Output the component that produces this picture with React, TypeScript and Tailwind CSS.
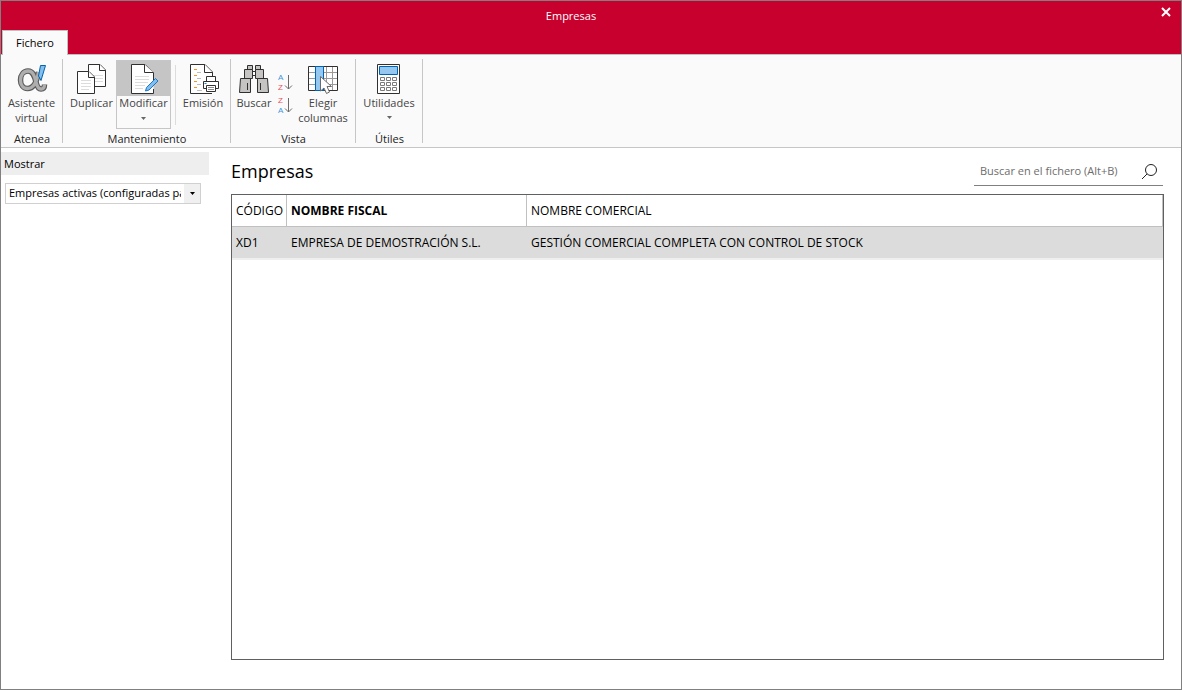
import type { ReactNode } from "react";

interface RibbonGroupProps {
  title: string;
  className: string;
  children: ReactNode;
}

interface RibbonButtonProps {
  label: string;
  icon: ReactNode;
  className: string;
  hasMenu?: boolean;
}

interface Company {
  code: string;
  fiscalName: string;
  tradeName: string;
}

const companies: Company[] = [
  {
    code: "XD1",
    fiscalName: "EMPRESA DE DEMOSTRACIÓN S.L.",
    tradeName: "GESTIÓN COMERCIAL COMPLETA CON CONTROL DE STOCK",
  },
];

const alphaPath =
  "M22.5 9C21 18 17.500 25.500 11.500 25.500C7 25.500 4.500 21.500 4.500 17C4.500 12 7.500 8 12 8C17 8 18.500 13 20 19C21.200 24 22.500 26 25 26C27.500 26 28.500 24.500 28.500 21.500";

function AssistantIcon() {
  return (
    <svg width="32" height="32" viewBox="0 0 32 32" fill="none">
      <path d={alphaPath} stroke="#5a5a5a" strokeWidth="5.500" />
      <path d={alphaPath} stroke="#aeaeae" strokeWidth="3.300" />
      <path d="M24.500 2.500H29.500L25 17.500L22.500 13Z" fill="#83beec" stroke="#0063b1" />
    </svg>
  );
}

function DuplicateIcon() {
  return (
    <svg width="32" height="32" viewBox="0 0 32 32" fill="#fff" stroke="#303030">
      <path d="M12.500 1.500H24L29.500 7V23.500H12.500Z" />
      <path d="M23.500 1.500V7.500H29.500" />
      <path d="M16 12.500H27M16 15.500H27M16 18.500H27" stroke="#dcdcdc" />
      <path d="M1.500 8.500H13L18.500 14V30.500H1.500Z" />
      <path d="M12.500 8.500V14.500H18.500" />
      <path d="M5 17.500H15M5 20.500H15M5 23.500H15M5 26.500H13" stroke="#dcdcdc" />
    </svg>
  );
}

function EditIcon() {
  return (
    <svg width="32" height="32" viewBox="0 0 32 32" fill="#fff" stroke="#303030">
      <path d="M3.500 1.500H17L25.500 10V30.500H3.500Z" stroke="none" />
      <path d="M25.500 17V10L17 1.500H3.500V30.500H25.500V26" fill="none" />
      <path d="M16.500 1.500V9.500H25.500" />
      <path d="M7 13.500H21M7 16.500H21M7 19.500H20M7 22.500H17M7 25.500H15" stroke="#dcdcdc" />
      <path d="M17.500 28L18.500 24.500L27.500 15.500L30 18L21 27Z" fill="#83beec" stroke="#1979ca" />
    </svg>
  );
}

function PrintIcon() {
  return (
    <svg width="32" height="32" viewBox="0 0 32 32" fill="#fff" stroke="#303030">
      <path d="M25.500 13V9L18 1.500H3.500V30.500H25" />
      <path d="M17.500 1.500V9.500H25.500" />
      <path d="M7 6.500H10M7 12.500H10M7 18.500H10M7 24.500H10" stroke="#f7941d" />
      <path d="M10 9.500H14M10 15.500H14M10 21.500H14M10 27.500H15" stroke="#bdbdbd" />
      <path d="M19.500 13.500H28.500V18.500H19.500Z" />
      <path d="M16.500 18.500H31.500V25.500H16.500Z" />
      <path d="M17.500 20.500H19.500" stroke="#1979ca" />
      <path d="M19.500 22.500H28.500V28.500H19.500Z" />
      <path d="M21 24.500H27M21 26.500H27" stroke="#8a8a8a" />
    </svg>
  );
}

function BinocularsIcon() {
  return (
    <svg width="32" height="32" viewBox="0 0 32 32" fill="#c6c4c2" stroke="#303030">
      <path d="M9.500 2.500H14.500V6.500H9.500ZM17.500 2.500H22.500V6.500H17.500Z" />
      <path d="M14.500 8.500H17.500V12.500H14.500Z" fill="#fff" />
      <path d="M6.500 6.500H14.500V15.500H6.500ZM17.500 6.500H25.500V15.500H17.500Z" />
      <path d="M2.500 15.500H12.500V29.500H1.500ZM19.500 15.500H29.500L30.500 29.500H19.500Z" />
      <path d="M9.500 20V27M22.500 20V27" />
    </svg>
  );
}

function ColumnsIcon() {
  return (
    <svg width="32" height="32" viewBox="0 0 32 32" fill="#fff" stroke="#303030">
      <path d="M1.500 3.500H30.500V27.500H1.500Z" />
      <path d="M2 9.500H30M2 15.500H30M2 21.500H30M19.500 4V27M25.500 4V27" stroke="#9a9a9a" />
      <path d="M8.500 3.500H16.500V27.500H8.500Z" fill="#94c8f0" stroke="#0063b1" />
      <path d="M13.500 13.500V28L17 25L19.500 30.500L22.500 29L20 23.500H24.500Z" stroke="#6a6a6a" />
    </svg>
  );
}

function CalculatorIcon() {
  return (
    <svg width="32" height="32" viewBox="0 0 32 32" fill="#fff" stroke="#303030">
      <path d="M4.500 1.500H26.500V30.500H4.500Z" />
      <path d="M6.500 3.500H24.500V11.500H6.500Z" fill="#94c8f0" stroke="#0063b1" />
      <path
        d="M7.500 14.500h4v3h-4zM13.500 14.500h4v3h-4zM19.500 14.500h4v3h-4zM7.500 19.500h4v3h-4zM13.500 19.500h4v3h-4zM19.500 19.500h4v3h-4zM7.500 24.500h4v3h-4zM13.500 24.500h4v3h-4zM19.500 24.500h4v3h-4z"
        stroke="#7a7a7a"
      />
    </svg>
  );
}

function SortIcon({ descending = false }: { descending?: boolean }) {
  return (
    <svg width="16" height="18" viewBox="0 0 16 18" fontSize="8" fontFamily="Liberation Sans, sans-serif">
      <text x="1" y="7" fill={descending ? "#e8505b" : "#3a96dd"}>
        {descending ? "Z" : "A"}
      </text>
      <text x="1" y="17" fill={descending ? "#3a96dd" : "#e8505b"}>
        {descending ? "A" : "Z"}
      </text>
      <path d="M11.500 2V16M8 12.500L11.500 16L15 12.500" fill="none" stroke="#6a6a6a" />
    </svg>
  );
}

function CaretIcon({ className }: { className: string }) {
  return (
    <svg className={className} width="5" height="3" viewBox="0 0 5 3" fill="currentColor">
      <path d="M0 0H5L2.500 3Z" />
    </svg>
  );
}

function RibbonButton({ label, icon, className, hasMenu }: RibbonButtonProps) {
  return (
    <button type="button" className={`flex flex-col items-center pt-1 text-[#444] ${className}`}>
      {icon}
      <span className="leading-[15px]">{label}</span>
      {hasMenu && <CaretIcon className="mt-[6px] text-[#666]" />}
    </button>
  );
}

function RibbonGroup({ title, className, children }: RibbonGroupProps) {
  return (
    <section className={`flex flex-col border-r border-[#c6c6c6] ${className}`}>
      <div className="flex flex-1 items-start">{children}</div>
      <h2 className="pl-px text-center leading-2 text-[#222]">{title}</h2>
    </section>
  );
}

export default function App() {
  return (
    <div className="flex h-screen flex-col border border-[#808080] bg-white font-['Open_Sans',sans-serif] text-[11px] text-black">
      <header className="flex h-[54px] flex-col justify-between border-b border-[#c0c0c0] bg-[#c8002d]">
        <div className="flex items-start">
          <h1 className="flex-1 pt-[7px] text-center leading-4 text-white">Empresas</h1>
          <button type="button" aria-label="Cerrar" className="flex w-10 justify-end pt-[6px] pr-[10px]">
            <svg width="10" height="10" viewBox="0 0 10 10" stroke="#fff" strokeWidth="2">
              <path d="M1 1L9 9M9 1L1 9" />
            </svg>
          </button>
        </div>
        <nav className="-mb-px flex px-px">
          <button
            type="button"
            className="h-[25px] w-[66px] border border-b-0 border-[#c0c0c0] bg-[#fafafa] text-center"
          >
            Fichero
          </button>
        </nav>
      </header>

      <div className="flex h-[93px] border-b border-[#c6c6c6] bg-[#fafafa] pt-1 pb-1">
        <RibbonGroup title="Atenea" className="w-[62px]">
          <RibbonButton label="Asistente virtual" icon={<AssistantIcon />} className="w-[61px]" />
        </RibbonGroup>
        <RibbonGroup title="Mantenimiento" className="w-[168px]">
          <RibbonButton label="Duplicar" icon={<DuplicateIcon />} className="w-[53px] pl-1" />
          <button
            type="button"
            className="mt-px flex h-[69px] w-[55px] flex-col items-center border border-[#c6c6c6] text-[#444]"
          >
            <span className="flex h-[35px] w-full justify-center bg-[#c5c5c5] pt-[2px]">
              <EditIcon />
            </span>
            <span className="leading-[13px]">Modificar</span>
            <CaretIcon className="mt-2 text-[#666]" />
          </button>
          <div className="mt-[6px] ml-1 h-[60px] w-px bg-[#dcdcdc]" />
          <RibbonButton label="Emisión" icon={<PrintIcon />} className="w-[54px]" />
        </RibbonGroup>
        <RibbonGroup title="Vista" className="w-[125px]">
          <RibbonButton label="Buscar" icon={<BinocularsIcon />} className="w-[46px]" />
          <div className="flex flex-col gap-[5px] pt-[14px]">
            <button type="button" aria-label="Orden ascendente">
              <SortIcon />
            </button>
            <button type="button" aria-label="Orden descendente">
              <SortIcon descending />
            </button>
          </div>
          <RibbonButton label="Elegir columnas" icon={<ColumnsIcon />} className="w-[60px]" />
        </RibbonGroup>
        <RibbonGroup title="Útiles" className="w-[67px]">
          <RibbonButton label="Utilidades" icon={<CalculatorIcon />} className="w-full" hasMenu />
        </RibbonGroup>
      </div>

      <div className="flex min-h-0 flex-1">
        <aside className="w-[208px] pt-1">
          <label htmlFor="filter" className="block h-[23px] bg-[#eee] px-[3px] leading-[23px]">
            Mostrar
          </label>
          <div className="relative mt-2 mr-2 ml-1 flex">
            <select
              id="filter"
              className="h-[21px] w-full appearance-none border border-[#d0d0d0] bg-white pr-[19px] pl-[3px]"
            >
              <option>Empresas activas (configuradas para Atenea)</option>
            </select>
            <span className="pointer-events-none absolute inset-y-px right-px flex w-4 items-center justify-center bg-[#f0f0f0]">
              <CaretIcon className="text-black" />
            </span>
          </div>
        </aside>

        <main className="flex flex-1 flex-col pt-2 pr-[17px] pb-[29px] pl-[22px]">
          <div className="flex h-[38px] items-start justify-between">
            <h2 className="text-[18px] leading-[30px]">Empresas</h2>
            <div className="mr-px flex h-[30px] w-[189px] items-center border-b border-[#808080] pr-[5px] pl-[6px]">
              <input
                type="text"
                aria-label="Buscar en el fichero"
                placeholder="Buscar en el fichero (Alt+B)"
                className="min-w-0 flex-1 pt-[2px] outline-none placeholder:text-[#6d6d6d]"
              />
              <button type="button" aria-label="Buscar" className="pt-px">
                <svg width="17" height="17" viewBox="0 0 17 17" fill="none" stroke="#222">
                  <circle cx="10" cy="7" r="5.500" />
                  <path d="M6 11L1 16" />
                </svg>
              </button>
            </div>
          </div>

          <div className="flex-1 border border-[#606060]">
            <table className="w-full table-fixed border-separate border-spacing-0 text-left text-[12px]">
              <thead>
                <tr className="h-8">
                  <th className="w-[55px] border-r border-b border-[#c0c0c0] px-1 font-normal">CÓDIGO</th>
                  <th className="w-[240px] border-r border-b border-[#c0c0c0] px-1 font-bold">NOMBRE FISCAL</th>
                  <th className="border-r border-b border-[#c0c0c0] px-1 font-normal">NOMBRE COMERCIAL</th>
                </tr>
              </thead>
              <tbody>
                {companies.map((company) => (
                  <tr className="h-[33px] bg-[#dcdcdc]" key={company.code}>
                    <td className="border-b-2 border-[#efefef] px-1">{company.code}</td>
                    <td className="border-b-2 border-[#efefef] px-1">{company.fiscalName}</td>
                    <td className="border-b-2 border-[#efefef] px-1">{company.tradeName}</td>
                  </tr>
                ))}
              </tbody>
            </table>
          </div>
        </main>
      </div>
    </div>
  );
}
